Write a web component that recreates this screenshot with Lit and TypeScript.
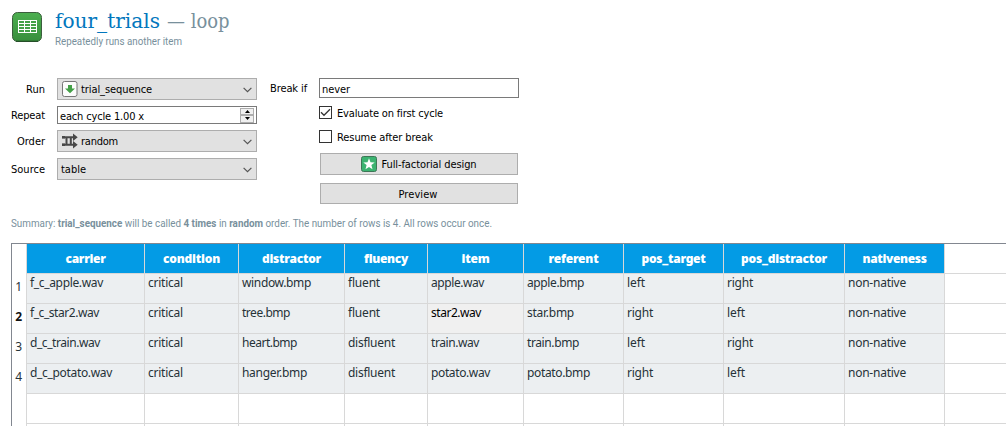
import { LitElement, html, css, svg } from "lit";
import { customElement, property } from "lit/decorators.js";
import { classMap } from "lit/directives/class-map.js";

/** A line of text set to an exact measure, by tracking or by condensing. */
@customElement("fit-text")
class FitText extends LitElement {
  @property({ type: Number }) w = 0;
  @property({ type: Boolean }) squeeze = false;
  static styles = css`
    :host { display: inline-block; white-space: pre; flex: none; text-align: left; }
    .run { display: inline-block; transform-origin: 0 50%; }
  `;
  updated() {
    const run = this.renderRoot.querySelector(".run") as HTMLElement;
    run.style.letterSpacing = "0px";
    run.style.transform = "none";
    const natural = run.getBoundingClientRect().width;
    if (!natural || !this.w) return;
    if (this.squeeze) {
      run.style.transform = `scaleX(${this.w / natural})`;
    } else {
      const n = (this.textContent || "").length;
      run.style.letterSpacing = `${(this.w - natural) / n}px`;
    }
    this.style.width = `${this.w}px`;
  }
  render() {
    return html`<span class="run"><slot></slot></span>`;
  }
}

type Cell = [string, number];

const columns: { name: Cell; width: number; cells: Cell[] }[] = [
  { name: ["carrier", 40], width: 118, cells: [["f_c_apple.wav", 73], ["f_c_star2.wav", 69], ["d_c_train.wav", 70], ["d_c_potato.wav", 82]] },
  { name: ["condition", 57], width: 94, cells: [["critical", 35], ["critical", 35], ["critical", 35], ["critical", 35]] },
  { name: ["distractor", 59], width: 106, cells: [["window.bmp", 69], ["tree.bmp", 48], ["heart.bmp", 55], ["hanger.bmp", 65]] },
  { name: ["fluency", 44], width: 83, cells: [["fluent", 32], ["fluent", 32], ["disfluent", 47], ["disfluent", 47]] },
  { name: ["item", 28], width: 96, cells: [["apple.wav", 53], ["star2.wav", 50], ["train.wav", 48], ["potato.wav", 59]] },
  { name: ["referent", 50], width: 100, cells: [["apple.bmp", 57], ["star.bmp", 47], ["train.bmp", 52], ["potato.bmp", 63]] },
  { name: ["pos_target", 64], width: 100, cells: [["left", 18], ["right", 26], ["left", 18], ["right", 26]] },
  { name: ["pos_distractor", 86], width: 121, cells: [["right", 26], ["left", 18], ["right", 26], ["left", 18]] },
  { name: ["nativeness", 64], width: 100, cells: [["non-native", 58], ["non-native", 58], ["non-native", 58], ["non-native", 58]] },
];

const chevron = html`<svg class="chev" width="9" height="6" viewBox="0 0 9 6">
  <path d="M.6 .8 4.5 4.7 8.4 .8" fill="none" stroke="#555" stroke-width="1.2" /></svg>`;

const t = (text: string, w: number) => html`<fit-text .w=${w}>${text}</fit-text>`;

@customElement("app-root")
class AppRoot extends LitElement {
  static styles = css`
    :host { display: block; width: 1006px; height: 426px; overflow: hidden; background: #fff; color: #000;
      font: 11px/14px "DejaVu Sans Condensed", "Noto Sans", sans-serif; }
    * { box-sizing: border-box; }
    svg { display: block; flex: none; }
    .head { display: flex; height: 78px; padding: 12px 0 0 12px; gap: 13px; }
    .title { display: flex; gap: 7px; height: 24px; margin-top: -4px; color: #78909c;
      font: 20.5px/26px "DejaVu Serif Condensed", "DejaVu Serif", serif; }
    .name { color: #0277bd; }
    .sub { color: #78909c; font: 11.5px/14px Roboto, sans-serif; margin-top: 2px; }
    .controls { display: flex; height: 137px; }
    .controls fit-text { padding-top: 2px; }
    .left { display: grid; grid-template-columns: 45px 200px; column-gap: 12px; grid-template-rows: 22px 18px 22px 22px;
      row-gap: 6px; align-content: start; align-items: center; justify-items: end; }
    .combo, .spin, .input, .button { display: flex; align-items: center; width: 200px; }
    .combo { height: 22px; background: #e1e1e1; border: 1px solid #adadad; padding: 0 4px 0 3px; gap: 3px; }
    .combo .chev { margin: 2px 0 0 auto; }
    .spin { height: 18px; border: 1px solid #7a7a7a; background: #fff; padding: 2px 2px 0 2px; }
    .steps { display: flex; flex-direction: column; width: 14px; height: 15px; margin: -2px 0 0 auto; }
    .step { flex: 1; border: 1px solid #adadad; background: #f0f0f0; display: grid; place-items: center; }
    .right { display: grid; grid-template-columns: 36px 200px; column-gap: 13px; margin-left: 13px; align-content: start; }
    .bl { padding-top: 2px; }
    .stack { display: flex; flex-direction: column; }
    .input { height: 20px; border: 1px solid #7a7a7a; padding: 1px 0 0 2px; }
    .check { display: flex; align-items: center; gap: 5px; height: 13px; margin-top: 8px; }
    .check + .check { margin-top: 11px; }
    .box { width: 13px; height: 13px; border: 1px solid #333; }
    .button { width: 198px; height: 22px; margin: 10px 0 0 1px; background: #e1e1e1; border: 1px solid #adadad;
      justify-content: center; gap: 5px; padding-right: 1px; }
    .button.low { height: 21px; margin-top: 8px; padding-right: 2px; }
    .summary { height: 28px; padding: 1px 0 0 11px; color: #78909c; font: 11.5px/14px Roboto, sans-serif; display: flex; }
    .table { display: flex; margin-left: 11px; height: 183px; border-left: 1px solid #828790; border-top: 1px solid #828790;
      overflow: hidden; color: #263238; font: 12px/16px "Noto Sans", "Open Sans", sans-serif; }
    .nums { width: 15px; flex: none; border-right: 1px solid #d8d8d8; padding-top: 30px; }
    .num { height: 30px; padding: 5px 4px 0 0; text-align: right; }
    .num.on { font-weight: 700; color: #111; }
    .col { flex: none; }
    .rest { flex: 1; }
    .th, .td { height: 30px; border-right: 1px solid #d8d8d8; border-bottom: 1px solid #d8d8d8; }
    .th { background: #039be5; color: #fff; font: 900 12px/16px "Noto Sans", "Open Sans", sans-serif;
      display: flex; justify-content: center; padding-top: 7px; }
    .td { padding: 1px 0 0 3px; }
    .full { background: #eceff1; }
    .sel { background: #f0f0f0; color: #000; }
    .rest .th { background: #fff; }
    .rest .th, .rest .td { border-right: 0; }
  `;

  render() {
    return html`
      <div class="head">
        <svg width="30" height="30" viewBox="0 0 30 30">
          <defs><linearGradient id="g" x2="0" y2="1"><stop stop-color="#4caf50" /><stop offset="1" stop-color="#388e3c" /></linearGradient></defs>
          <rect x=".5" y=".5" width="29" height="29" rx="5" fill="url(#g)" stroke="#3b5e3d" />
          <path d="M4 29.3H26" stroke="#234d26" stroke-width="1.2" />
          <rect x="6" y="8" width="19" height="13" fill="#fff" />
          ${[9, 12, 15, 18].map((y) => [7, 13, 19].map((x) => svg`<rect x=${x} y=${y} width="5" height="2" fill="#43a047"/>`))}
        </svg>
        <div>
          <div class="title"><fit-text class="name" squeeze .w=${105}>four_trials</fit-text><fit-text squeeze .w=${62.5}>— loop</fit-text></div>
          <div class="sub"><fit-text squeeze .w=${127}>Repeatedly runs another item</fit-text></div>
        </div>
      </div>

      <div class="controls">
        <div class="left">
          <div class="label">${t("Run", 19)}</div>
          <div class="combo">
            <svg width="17" height="16" viewBox="0 0 17 16"><rect x="1.5" y=".5" width="14.5" height="15" rx="2" fill="#fcfcfc" stroke="#777" />
              <path d="M7 4h4v3.5h3L9 12.3 4 7.500h3z" fill="#43a047" /></svg>
            ${t("trial_sequence", 71)}${chevron}
          </div>
          <div class="label">${t("Repeat", 34)}</div>
          <div class="spin">
            ${t("each cycle 1.00 x", 84)}
            <div class="steps">
              <div class="step"><svg width="5" height="3" viewBox="0 0 5 3"><path d="M0 3 2.500 0 5 3z" /></svg></div>
              <div class="step"><svg width="5" height="3" viewBox="0 0 5 3"><path d="M0 0 2.500 3 5 0z" /></svg></div>
            </div>
          </div>
          <div class="label">${t("Order", 28)}</div>
          <div class="combo">
            <svg width="17" height="16" viewBox="0 0 17 16" fill="none" stroke="#484848" stroke-width="2.600">
              <path d="M1 4.200H5.500V11.800H13M1 11.800H5.500M5.500 4.200H9.800V11.800M9.800 4.200H13" stroke-width="2" />
              <path d="M1 4.200H4M1 11.800H4" />
              <path d="M12 .5 16.700 4.200 12 8zM12 8 16.700 11.800 12 15.500z" fill="#484848" stroke="none" /></svg>
            ${t("random", 37)}${chevron}
          </div>
          <div class="label">${t("Source", 34)}</div>
          <div class="combo">${t("table", 25)}${chevron}</div>
        </div>

        <div class="right">
          <div class="bl">${t("Break if", 37)}</div>
          <div class="stack">
            <div class="input">${t("never", 28)}</div>
            <div class="check"><div class="box"><svg width="11" height="11" viewBox="0 0 11 11"><path d="M1 5.300 4 8.300 10 2.300" fill="none" stroke="#333" stroke-width="1.300" /></svg></div>${t("Evaluate on first cycle", 106)}</div>
            <div class="check"><div class="box"></div>${t("Resume after break", 96)}</div>
            <div class="button">
              <svg width="16" height="16" viewBox="0 0 16 16"><rect x=".5" y=".5" width="15" height="15" rx="2" fill="#3cb371" stroke="#3d7656" />
                <path d="M8 2.300 9.500 6.300 13.700 6.500 10.400 9.100 11.500 13.200 8 10.900 4.500 13.200 5.600 9.100 2.300 6.500 6.500 6.300z" fill="#fff" /></svg>
              ${t("Full-factorial design", 95)}
            </div>
            <div class="button low">${t("Preview", 39)}</div>
          </div>
        </div>
      </div>

      <div class="summary"><fit-text squeeze .w=${481}>Summary: <b>trial_sequence</b> will be called <b>4 times</b> in <b>random</b> order. The number of rows is 4. All rows occur once.</fit-text></div>

      <div class="table">
        <div class="nums">${[1, 2, 3, 4].map((n) => html`<div class=${classMap({ num: true, on: n === 2 })}>${n}</div>`)}</div>
        ${columns.map((c) => html`<div class="col" style="width:${c.width}px">
          <div class="th">${t(...c.name)}</div>
          ${c.cells.map((v, i) => html`<div class=${classMap({ td: true, full: true, sel: v[0] === "star2.wav" && i === 1 })}>${t(...v)}</div>`)}
          <div class="td"></div><div class="td"></div>
        </div>`)}
        <div class="rest"><div class="th"></div>${[0, 1, 2, 3, 4, 5].map(() => html`<div class="td"></div>`)}</div>
      </div>
    `;
  }
}
